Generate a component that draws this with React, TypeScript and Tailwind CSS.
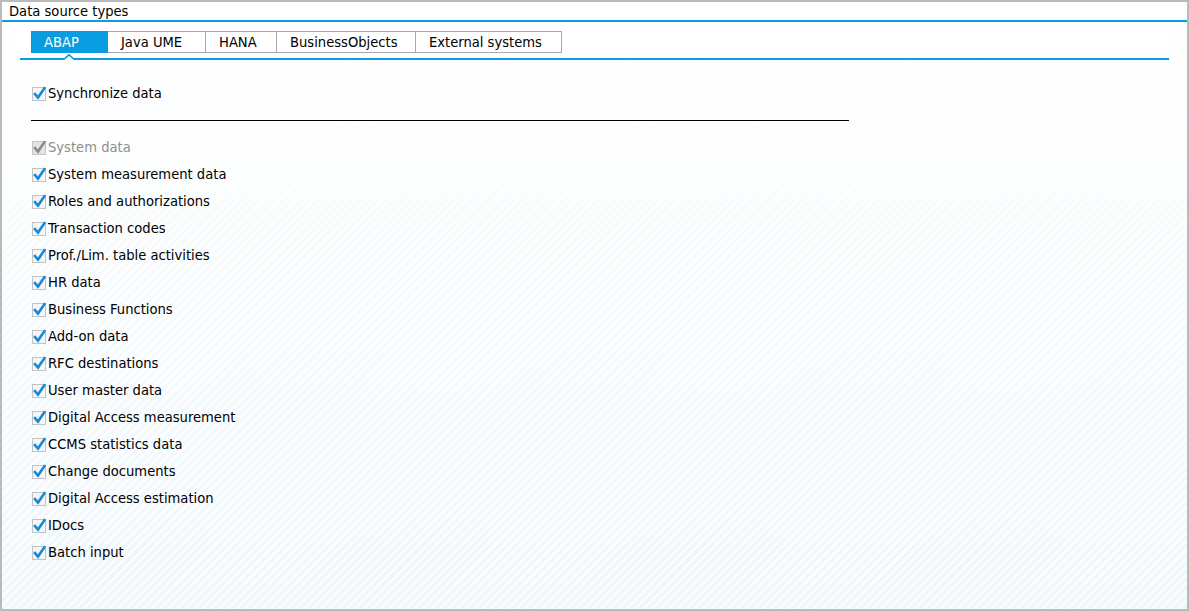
import React from 'react'

const TABS = [
  { label: 'ABAP', w: 'w-[77px]' },
  { label: 'Java UME', w: 'w-[98px]' },
  { label: 'HANA', w: 'w-[71px]' },
  { label: 'BusinessObjects', w: 'w-[139px]' },
  { label: 'External systems', w: 'w-[146px]' },
]

const ITEMS = [
  'System measurement data',
  'Roles and authorizations',
  'Transaction codes',
  'Prof./Lim. table activities',
  'HR data',
  'Business Functions',
  'Add-on data',
  'RFC destinations',
  'User master data',
  'Digital Access measurement',
  'CCMS statistics data',
  'Change documents',
  'Digital Access estimation',
  'IDocs',
  'Batch input',
]

function CheckBox({ disabled = false }: { disabled?: boolean }) {
  return (
    <svg width="15" height="16" viewBox="0 0 15 16" className="shrink-0">
      <rect x="0.5" y="1.5" width="13" height="13" fill={disabled ? '#e4e4e4' : '#f4f6f8'} stroke="#c3c3c3" />
      <path
        d="M3 8.2 L6 11.6 L12.4 2.2"
        fill="none"
        stroke={disabled ? '#8a8a8a' : '#1789d4'}
        strokeWidth="2.6"
        strokeLinecap="square"
        strokeLinejoin="miter"
      />
    </svg>
  )
}

function Row({ label, disabled = false }: { label: string; disabled?: boolean }) {
  return (
    <div className="flex items-center gap-[1px] h-[27px]">
      <CheckBox disabled={disabled} />
      <span className={`text-[14.6px] leading-none ${disabled ? 'text-[#8f8f8f]' : 'text-black'}`}>{label}</span>
    </div>
  )
}

export default function App() {
  return (
    <div
      className="w-[1189px] h-[611px] border-2 border-[#bababa] flex flex-col text-black"
      style={{ fontFamily: '"DejaVu Sans Condensed", "Liberation Sans", Arial, sans-serif' }}
    >
      <div className="h-[18px] pl-[7px] flex items-center bg-white text-[14.6px] leading-none">Data source types</div>
      <div className="h-[2px] bg-[#0a9ce0]" />
      <div className="flex-1 flex flex-col bg-[linear-gradient(to_bottom,rgba(255,255,255,0.97),rgba(255,255,255,0.35)),repeating-linear-gradient(135deg,#e6f2fa_0_3px,#f8fbfe_3px_6px)]">
        <div className="mx-[18px] bg-white pt-[9px] pl-[11px] relative border-b-2 border-[#0a9ce0]">
          <div className="flex h-[22px] mb-[5px]">
            {TABS.map((t, i) => (
              <div
                key={t.label}
                className={`${t.w} h-[22px] pl-[13px] flex items-center text-[14.6px] leading-none ${
                  i === 0 ? 'bg-[#0a9ce0] text-white' : 'bg-white border border-l-0 border-[#a9a9a9]'
                }`}
              >
                {t.label}
              </div>
            ))}
          </div>
          <svg width="12" height="6" viewBox="0 0 12 6" className="absolute left-[43px] bottom-[-2px]">
            <path d="M0 6 L6 0.8 L12 6" fill="white" stroke="#0a9ce0" strokeWidth="1.6" />
          </svg>
        </div>
        <div className="pl-[30px] pt-[20px]">
          <Row label="Synchronize data" />
          <div className="w-[818px] h-[1px] bg-black ml-[-1px] mt-[13px] mb-[13px]" />
          <Row label="System data" disabled />
          {ITEMS.map((it) => (
            <Row key={it} label={it} />
          ))}
        </div>
      </div>
    </div>
  )
}
